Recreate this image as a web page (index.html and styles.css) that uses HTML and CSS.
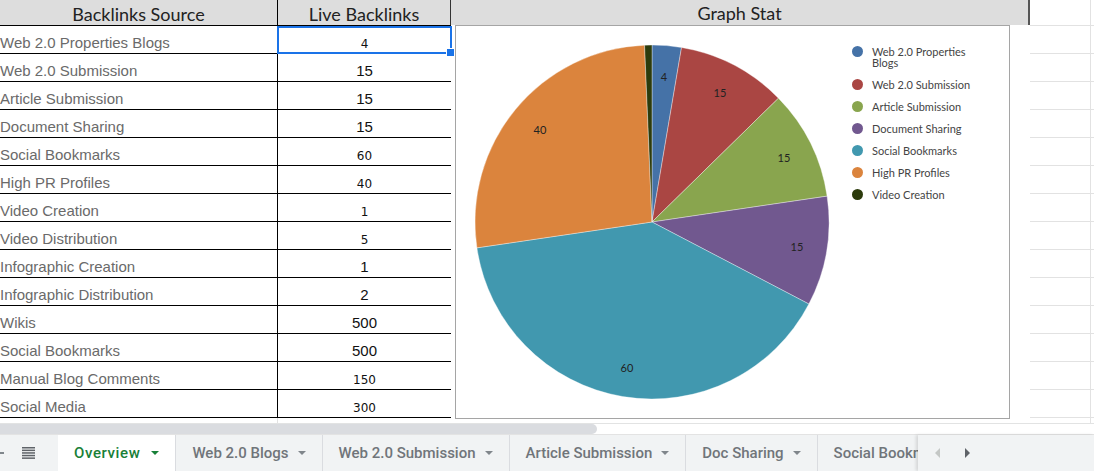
FILE: index.html
```html
<!DOCTYPE html>
<html lang="en">
<head>
  <meta charset="UTF-8" />
  <title>Backlinks Report</title>
  <link rel="stylesheet" href="styles.css">
</head>
<body>
  <div class="sheet">
    <div class="data">
      <div class="row head">
        <div class="cell src">Backlinks Source</div>
        <div class="cell num">Live Backlinks</div>
      </div>
      <div class="row"><div class="cell src">Web 2.0 Properties Blogs</div><div class="cell num small selected">4</div></div>
      <div class="row"><div class="cell src">Web 2.0 Submission</div><div class="cell num">15</div></div>
      <div class="row"><div class="cell src">Article Submission</div><div class="cell num">15</div></div>
      <div class="row"><div class="cell src">Document Sharing</div><div class="cell num">15</div></div>
      <div class="row"><div class="cell src">Social Bookmarks</div><div class="cell num small">60</div></div>
      <div class="row"><div class="cell src">High PR Profiles</div><div class="cell num small">40</div></div>
      <div class="row"><div class="cell src">Video Creation</div><div class="cell num small">1</div></div>
      <div class="row"><div class="cell src">Video Distribution</div><div class="cell num small">5</div></div>
      <div class="row"><div class="cell src">Infographic Creation</div><div class="cell num">1</div></div>
      <div class="row"><div class="cell src">Infographic Distribution</div><div class="cell num">2</div></div>
      <div class="row"><div class="cell src">Wikis</div><div class="cell num">500</div></div>
      <div class="row"><div class="cell src">Social Bookmarks</div><div class="cell num">500</div></div>
      <div class="row"><div class="cell src">Manual Blog Comments</div><div class="cell num small">150</div></div>
      <div class="row"><div class="cell src">Social Media</div><div class="cell num small">300</div></div>
    </div>

    <div class="graph">
      <div class="graph-head">Graph Stat</div>
      <div class="chart">
        <svg class="pie" width="392" height="392" viewBox="0 0 392 392">
          <!-- slices run clockwise from 12 o'clock, total = 150 -->
          <path class="c1" d="M196 196 L196 19 A177 177 0 0 1 225.52 21.48 Z"/>
          <path class="c2" d="M196 196 L225.52 21.48 A177 177 0 0 1 322.46 72.16 Z"/>
          <path class="c3" d="M196 196 L322.46 72.16 A177 177 0 0 1 371.10 170.14 Z"/>
          <path class="c4" d="M196 196 L371.10 170.14 A177 177 0 0 1 352.86 278.00 Z"/>
          <path class="c5" d="M196 196 L352.86 278.00 A177 177 0 0 1 20.90 221.86 Z"/>
          <path class="c6" d="M196 196 L20.90 221.86 A177 177 0 0 1 188.59 19.16 Z"/>
          <path class="c7" d="M196 196 L188.59 19.16 A177 177 0 0 1 196 19 Z"/>
          <g class="labels">
            <text x="208" y="50">4</text>
            <text x="264" y="66">15</text>
            <text x="328" y="131">15</text>
            <text x="341" y="220">15</text>
            <text x="171" y="341">60</text>
            <text x="84" y="103">40</text>
          </g>
        </svg>
        <ul class="legend">
          <li><i class="c1"></i><span>Web 2.0 Properties Blogs</span></li>
          <li><i class="c2"></i><span>Web 2.0 Submission</span></li>
          <li><i class="c3"></i><span>Article Submission</span></li>
          <li><i class="c4"></i><span>Document Sharing</span></li>
          <li><i class="c5"></i><span>Social Bookmarks</span></li>
          <li><i class="c6"></i><span>High PR Profiles</span></li>
          <li><i class="c7"></i><span>Video Creation</span></li>
        </ul>
      </div>
    </div>

    <div class="blank"></div>
  </div>

  <div class="hscroll"><div class="thumb"></div></div>

  <div class="tabs">
    <svg class="add" width="14" height="14" viewBox="0 0 14 14"><path d="M6 0h2v6h6v2H8v6H6V8H0V6h6z"/></svg>
    <svg class="menu" width="13" height="12" viewBox="0 0 13 12">
      <rect y="0" width="13" height="1.5"/>
      <rect y="2.6" width="13" height="1.5"/>
      <rect y="5.2" width="13" height="1.5"/>
      <rect y="7.8" width="13" height="1.5"/>
      <rect y="10.4" width="13" height="1.5"/>
    </svg>
    <div class="tablist">
      <div class="tab active">Overview <b class="caret"></b></div>
      <div class="tab">Web 2.0 Blogs <b class="caret"></b></div>
      <div class="tab">Web 2.0 Submission <b class="caret"></b></div>
      <div class="tab">Article Submission <b class="caret"></b></div>
      <div class="tab">Doc Sharing <b class="caret"></b></div>
      <div class="tab">Social Bookmarks <b class="caret"></b></div>
    </div>
    <div class="tabnav">
      <b class="arrow left"></b>
      <b class="arrow right"></b>
    </div>
  </div>
</body>
</html>
```

FILE: styles.css
```css
* {
  box-sizing: border-box;
}

body {
  margin: 0;
  width: 1094px;
  height: 471px;
  overflow: hidden;
  background: #fff;
  font-family: "Liberation Sans", Arial, sans-serif;
}

/* grid area */
.sheet {
  display: flex;
  height: 424px;
  border-bottom: 1px solid #e2e3e3;
}

.data {
  width: 451px;
  flex: none;
  background: linear-gradient(#e2e2e2, #e2e2e2) 277px 0 / 1px 100% no-repeat;
}

.row {
  display: flex;
  height: 28px;
  background: #fff;
  border-bottom: 1px solid #000;
}

.cell {
  display: flex;
  align-items: flex-end;
  line-height: 18px;
  padding-bottom: 1px;
  white-space: nowrap;
}

.src {
  width: 278px;
  border-right: 1px solid #000;
  color: #6a6a6a;
  font-size: 15px;
}

.num {
  width: 173px;
  justify-content: center;
  color: #111;
  font-size: 15px;
}

.num.small {
  font-family: "DejaVu Sans", sans-serif;
  font-size: 12px;
  padding-bottom: 0;
}

.head {
  height: 26px;
  background: #ddd;
}

.head .cell {
  justify-content: center;
  font-family: Lato, sans-serif;
  font-size: 18px;
  line-height: 22px;
  padding-bottom: 0;
  color: #222;
}

.head .num {
  border-right: 1px solid #333;
}

.selected {
  position: relative;
}

.selected::before {
  content: "";
  position: absolute;
  top: 0;
  left: -1px;
  right: -1px;
  bottom: -1px;
  border: 2px solid #1a73e8;
}

.selected::after {
  content: "";
  position: absolute;
  right: -4px;
  bottom: -4px;
  width: 7px;
  height: 7px;
  background: #1a73e8;
  border: 1px solid #fff;
}

/* chart column */
.graph {
  width: 579px;
  flex: none;
}

.graph-head {
  height: 25px;
  background: #ddd;
  border-right: 2px solid #555;
  text-align: center;
  font-family: Lato, sans-serif;
  font-size: 18px;
  line-height: 27px;
  color: #222;
}

.chart {
  display: flex;
  width: 555px;
  height: 394px;
  margin-left: 4px;
  border: 1px solid #a5a5a5;
  background: #fff;
}

.pie {
  flex: none;
}

.pie path {
  stroke: #fff;
  stroke-width: 0.6;
  stroke-opacity: 0.6;
}

.labels text {
  font-family: Lato, sans-serif;
  font-size: 11px;
  fill: #222;
  text-anchor: middle;
  dominant-baseline: central;
}

.c1 { fill: #4572a7; background: #4572a7; }
.c2 { fill: #aa4643; background: #aa4643; }
.c3 { fill: #89a54e; background: #89a54e; }
.c4 { fill: #71588f; background: #71588f; }
.c5 { fill: #4198af; background: #4198af; }
.c6 { fill: #db843d; background: #db843d; }
.c7 { fill: #2c3b0c; background: #2c3b0c; }

.legend {
  list-style: none;
  margin: 20px 0 0 4px;
  padding: 0;
  display: flex;
  flex-direction: column;
  gap: 11px;
  font-family: Lato, sans-serif;
  font-size: 11px;
  line-height: 11px;
  color: #444;
}

.legend li {
  display: flex;
  gap: 9px;
}

.legend i {
  flex: none;
  width: 11px;
  height: 11px;
  border-radius: 50%;
}

.legend span {
  width: 104px;
}

.blank {
  flex: 1;
  background:
    linear-gradient(#e2e2e2, #e2e2e2) 60px 0 / 1px 100% no-repeat,
    repeating-linear-gradient(to bottom, transparent 0 27px, #e2e2e2 27px 28px) 0 -2px;
}

/* horizontal scrollbar */
.hscroll {
  height: 10px;
}

.thumb {
  width: 597px;
  height: 10px;
  background: #dadce0;
  border-radius: 0 5px 5px 0;
}

/* sheet tabs */
.tabs {
  display: flex;
  align-items: stretch;
  height: 37px;
  border-top: 1px solid #e3e3e3;
  background: #f1f3f4;
  font-family: Roboto, sans-serif;
  font-weight: 500;
  font-size: 15px;
  color: #70757a;
}

.add {
  align-self: center;
  margin-left: -10px;
  fill: #80868b;
}

.menu {
  align-self: center;
  margin: 0 23px 0 18px;
  fill: #5f6368;
}

.tablist {
  display: flex;
  width: 860px;
  overflow: hidden;
}

.tab {
  display: flex;
  align-items: center;
  gap: 9px;
  padding: 0 16px;
  white-space: nowrap;
  border-right: 1px solid #dadce0;
}

.tab.active {
  background: #fff;
  color: #188038;
  letter-spacing: 0.6px;
  gap: 11px;
}

.caret {
  width: 0;
  height: 0;
  border-left: 4px solid transparent;
  border-right: 4px solid transparent;
  border-top: 4px solid #80868b;
}

.active .caret {
  border-top-color: #188038;
}

.tabnav {
  flex: 1;
  display: flex;
  align-items: center;
  gap: 25px;
  padding-left: 17px;
  background: #f1f3f4;
  box-shadow: -2px 0 3px rgba(0, 0, 0, 0.12);
}

.arrow {
  width: 0;
  height: 0;
  border-top: 5px solid transparent;
  border-bottom: 5px solid transparent;
}

.arrow.left {
  border-right: 5px solid #c4c7c5;
}

.arrow.right {
  border-left: 5px solid #5f6368;
}
```
